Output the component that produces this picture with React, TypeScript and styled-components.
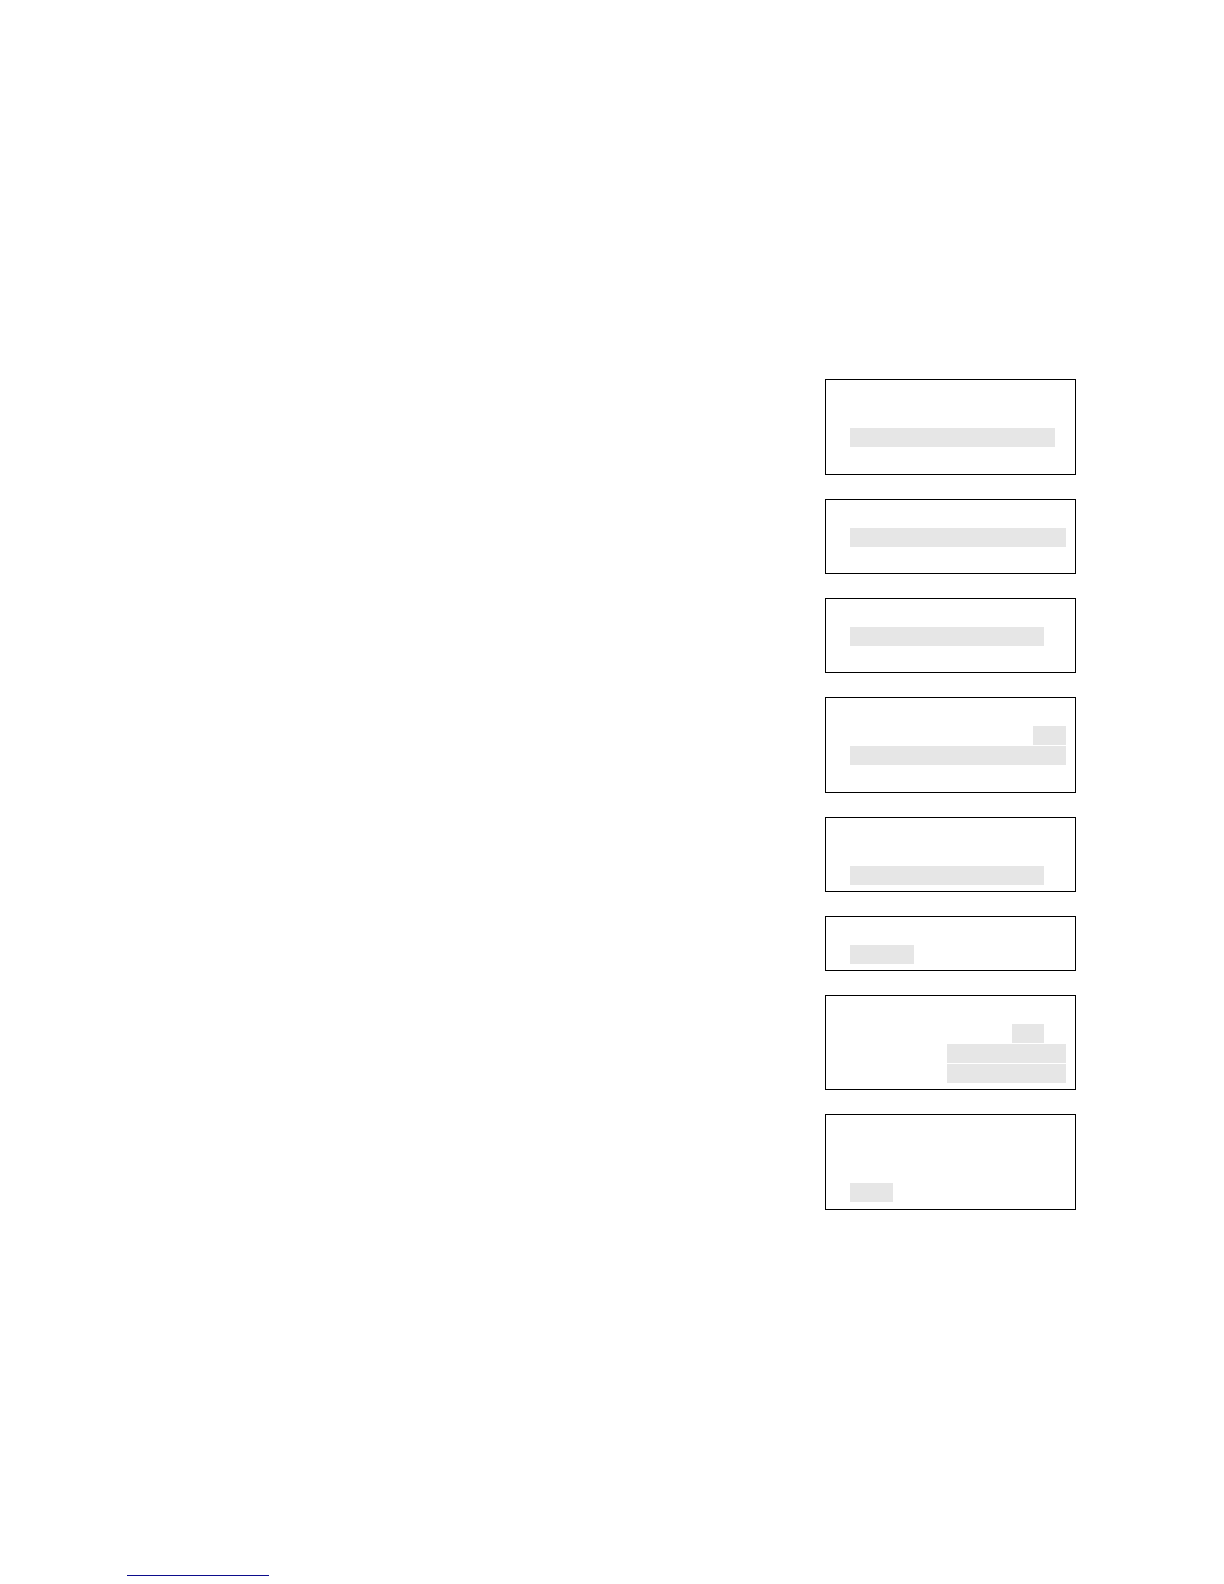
import React from "react";
import styled, { createGlobalStyle } from "styled-components";

const GlobalStyle = createGlobalStyle`
  body {
    margin: 0;
    background: #ffffff;
    font-family: "Liberation Mono", monospace;
  }
`;

const Page = styled.main`
  box-sizing: border-box;
  min-height: 100vh;
  display: flex;
  flex-direction: column;
  justify-content: space-between;
  padding: 379px 148px 8px 127px;
`;

const Listings = styled.div`
  display: flex;
  flex-direction: column;
  align-items: flex-end;
  gap: 24px;
`;

const Listing = styled.section<{ $roomy?: boolean }>`
  box-sizing: border-box;
  width: 251px;
  max-width: 100%;
  padding: 8px 0 ${(p) => (p.$roomy ? 6 : 5)}px 24px;
  border: 1px solid #000000;
`;

const Line = styled.div`
  height: 20px;
`;

const Highlight = styled.div<{ $start: number; $width: number }>`
  width: ${(p) => p.$width}px;
  height: 19px;
  margin-left: ${(p) => p.$start}px;
  background: #e6e6e6;
`;

const LinkRule = styled.hr`
  width: 142px;
  margin: 0;
  border: 0;
  border-top: 1px solid #0c0c8c;
`;

type Mark = { start: number; width: number } | null;

const listings: { lines: Mark[]; roomy?: boolean }[] = [
  { lines: [null, null, { start: 0, width: 205 }, null], roomy: true },
  { lines: [null, { start: 0, width: 216 }, null] },
  { lines: [null, { start: 0, width: 194 }, null] },
  {
    lines: [null, { start: 183, width: 33 }, { start: 0, width: 216 }, null],
    roomy: true,
  },
  { lines: [null, null, { start: 0, width: 194 }] },
  { lines: [null, { start: 0, width: 64 }] },
  {
    lines: [
      null,
      { start: 162, width: 32 },
      { start: 97, width: 119 },
      { start: 97, width: 119 },
    ],
  },
  { lines: [null, null, null, { start: 0, width: 43 }], roomy: true },
];

export default function App() {
  return (
    <>
      <GlobalStyle />
      <Page>
        <Listings>
          {listings.map((listing, i) => (
            <Listing key={i} $roomy={listing.roomy}>
              {listing.lines.map((mark, j) => (
                <Line key={j}>
                  {mark && <Highlight $start={mark.start} $width={mark.width} />}
                </Line>
              ))}
            </Listing>
          ))}
        </Listings>
        <LinkRule />
      </Page>
    </>
  );
}
